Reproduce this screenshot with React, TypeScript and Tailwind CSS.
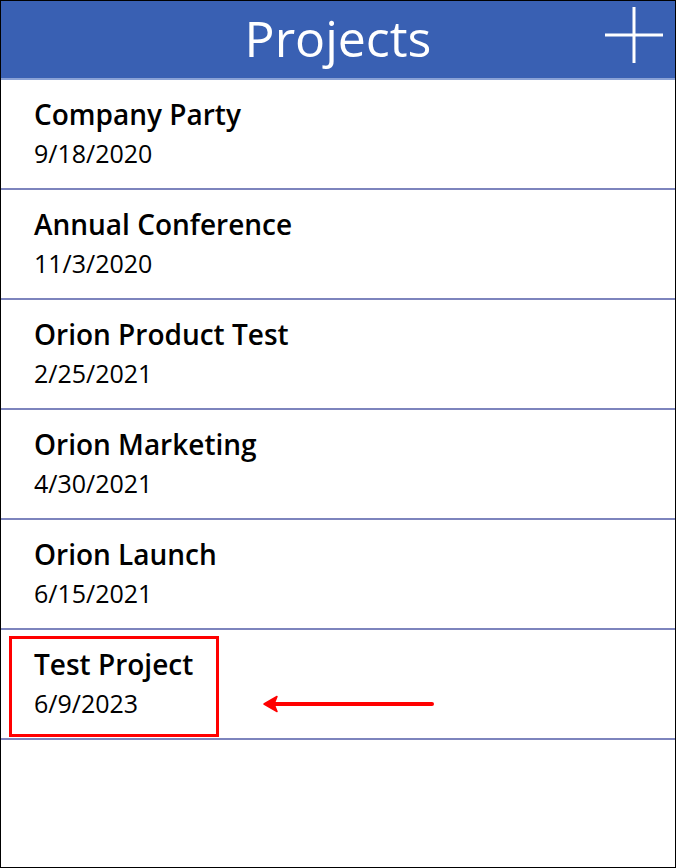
const projects = [
  { name: "Company Party", date: "9/18/2020" },
  { name: "Annual Conference", date: "11/3/2020" },
  { name: "Orion Product Test", date: "2/25/2021" },
  { name: "Orion Marketing", date: "4/30/2021" },
  { name: "Orion Launch", date: "6/15/2021" },
  { name: "Test Project", date: "6/9/2023" },
];

function ProjectRow({ name, date, highlight }: { name: string; date: string; highlight?: boolean }) {
  return (
    <div className="relative h-[110px] border-b-2 border-[#7d84bd]">
      <div className="pl-[33px] pt-[15px]">
        <p className="text-[28px] leading-[38px] font-semibold text-black">{name}</p>
        <p className="text-[25px] leading-[34px] mt-[3px] text-black">{date}</p>
      </div>
      {highlight && (
        <>
          {/* annotation box */}
          <div className="absolute left-[8px] top-[6px] w-[210px] h-[101px] border-[3px] border-[#ff0000]"></div>
          {/* annotation arrow */}
          <svg className="absolute left-[260px] top-[63px]" width="176" height="22" viewBox="0 0 176 22">
            <line x1="8" y1="11" x2="171" y2="11" stroke="#ff0000" strokeWidth="4" strokeLinecap="round" />
            <path d="M3 11 L16 3.5 L13 11 L16 18.5 Z" fill="#ff0000" stroke="#ff0000" strokeWidth="1.5" strokeLinejoin="round" />
          </svg>
        </>
      )}
    </div>
  );
}

export default function App() {
  return (
    <div
      className="w-[676px] h-[868px] border border-black bg-white overflow-hidden"
      style={{ fontFamily: '"Open Sans", "Noto Sans", sans-serif' }}
    >
      {/* Header */}
      <div className="relative h-[79px] bg-[#3960b3] border-b-2 border-[#8aa2d6] flex items-center justify-center">
        <h1 className="text-[50px] leading-none text-white -mt-[4px]">Projects</h1>
        <svg className="absolute left-[604px] top-[6px]" width="58" height="56" viewBox="0 0 58 56">
          <line x1="29" y1="0" x2="29" y2="56" stroke="white" strokeWidth="3" />
          <line x1="0" y1="28" x2="58" y2="28" stroke="white" strokeWidth="3" />
        </svg>
      </div>

      {/* List */}
      <div>
        {projects.map((p, i) => (
          <ProjectRow key={p.name} name={p.name} date={p.date} highlight={i === projects.length - 1} />
        ))}
      </div>
    </div>
  );
}
